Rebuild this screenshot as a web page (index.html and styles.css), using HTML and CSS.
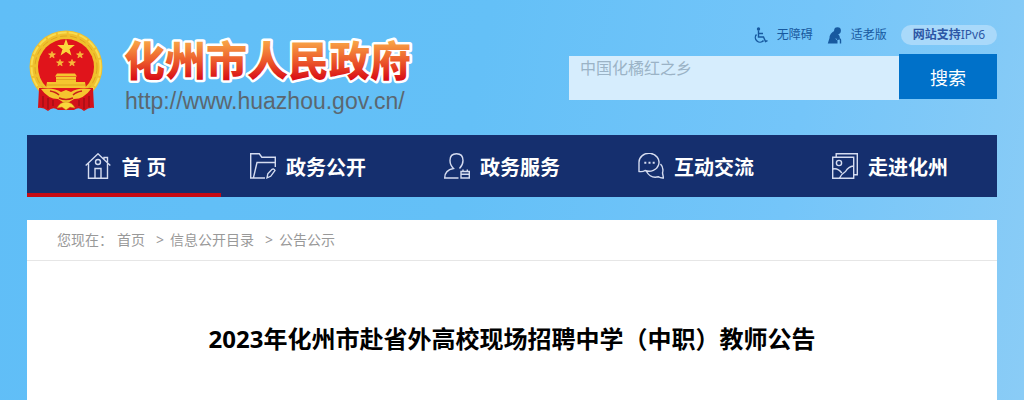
FILE: index.html
```
<!DOCTYPE html>
<html lang="zh-CN">
<head>
	<meta charset="UTF-8">
	<meta name="viewport" content="width=device-width, initial-scale=1.0">
	<title>2023年化州市赴省外高校现场招聘中学（中职）教师公告</title>
	<link rel="stylesheet" href="styles.css">
</head>
<body>
	<div class="page">
		<header class="header">
			<a class="brand" href="#">
				<svg class="emblem" viewBox="0 0 74 82" aria-hidden="true">
					<circle cx="37" cy="37" r="36.5" fill="#f0c02c"/>
					<circle cx="37" cy="37" r="34.5" fill="none" stroke="#f9dc50" stroke-width="2" stroke-dasharray="9 2"/>
					<circle cx="37" cy="37" r="31" fill="none" stroke="#dfa722" stroke-width="1" stroke-dasharray="7 3"/>
					<path d="M10 58 L9 78 Q14 77 19 81 Q24 76 29 80 L45 80 Q50 76 55 81 Q60 77 65 78 L64 58Z" fill="#d3121a"/>
					<path d="M14 66v11M19 68v11M24 70v6M50 70v6M55 68v11M60 66v11" stroke="#8f0d12" stroke-width="1" fill="none"/>
					<circle cx="37" cy="37" r="28" fill="#e0141b"/>
					<path d="M37 11l1.7 4.700 5 .1-4 3.100 1.400 4.800-4.100-2.800-4.100 2.800 1.400-4.800-4-3.100 5-.1z" fill="#fbd63c" stroke="#fbd63c" stroke-width="1.500"/>
					<g fill="#f8b93a" stroke="#f8b93a" stroke-width=".8">
						<path id="star" d="M23 21.500l.9 2.300 2.500.1-2 1.500.7 2.400-2.100-1.400-2.100 1.400.7-2.400-2-1.500 2.500-.1z"/>
						<use href="#star" x="28"/>
						<use href="#star" x="8" y="8"/>
						<use href="#star" x="20" y="8"/>
					</g>
					<path d="M28 43.500h18l2 3H26zM27 47h20v5H27zM18 52h38l1 6H17z" fill="#f5c52f"/>
					<path d="M18 55h38M27 49.500h20" stroke="#d99a1b" stroke-width=".8"/>
					<path d="M12 59 Q25 57 32 62 L37 60 L42 62 Q49 57 62 59 Q55 69 45 69 L37 74 L29 69 Q19 69 12 59Z" fill="#f5c52f"/>
					<path d="M21 61q6 1 9 4M53 61q-6 1-9 4M30 68q7 3 14 0" stroke="#c9211b" stroke-width="1.500" fill="none"/>
					<path d="M28 78q3-6 9-6t9 6l-5-1-4 3-4-3z" fill="#fbd63c" stroke="#c98314" stroke-width=".5"/>
				</svg>
				<span class="brand-text">
					<svg class="brand-name" viewBox="0 0 296 60" role="img" aria-label="化州市人民政府">
						<defs>
							<linearGradient id="fire" x1="0" y1="0" x2="0" y2="1">
								<stop offset=".2" stop-color="#f9a948"/>
								<stop offset=".55" stop-color="#ec5a2b"/>
								<stop offset=".85" stop-color="#d90f16"/>
							</linearGradient>
						</defs>
						<text x="3" y="48">化州市人民政府</text>
					</svg>
					<span class="brand-url">http://www.huazhou.gov.cn/</span>
				</span>
			</a>

			<div class="tools">
				<div class="links">
					<a class="tool" href="#">
						<svg class="tool-icon" viewBox="0 0 16 17" aria-hidden="true">
							<circle cx="5.500" cy="2" r="1.700" fill="currentColor"/>
							<path d="M5.500 3.500v6.500h5l2 4.500 2-.8M6 6.500h4M3.500 7.500a4.600 4.600 0 1 0 7 6" fill="none" stroke="currentColor" stroke-width="1.400"/>
						</svg>
						无障碍
					</a>
					<a class="tool" href="#">
						<svg class="tool-icon" viewBox="0 0 16 17" aria-hidden="true">
							<circle cx="10.500" cy="3.700" r="3.400" fill="currentColor"/>
							<path d="M8 3.500 Q2.500 6 2.500 11 L.8 16.500H10.500V13.500l-2.500-2 3 .5 2-.5-.5-2.500-2-3z" fill="currentColor"/>
							<path d="M10 12.500q3.500-1.500 3.500.5v3.500" fill="none" stroke="currentColor" stroke-width="1.400"/>
						</svg>
						适老版
					</a>
					<a class="ipv6" href="#"><b>网站支持</b>IPv6</a>
				</div>
				<form class="search">
					<input class="search-box" type="text" placeholder="中国化橘红之乡" aria-label="站内搜索">
					<button class="search-btn" type="button">搜索</button>
				</form>
			</div>
		</header>

		<nav class="nav">
			<a class="nav-item home" href="#">
				<svg class="nav-icon" viewBox="0 0 26 26" aria-hidden="true">
					<path d="M.7 12.500 13 .8l12.300 11.700M3.500 10.500v14.800h19V10.500M19 6V4.500h3.500V9M10 25V15.500h6V25"/>
					<circle cx="13" cy="9" r="2.500"/>
				</svg>
				首 页
			</a>
			<a class="nav-item" href="#">
				<svg class="nav-icon" viewBox="0 0 26 26" aria-hidden="true">
					<path d="M15 25H.7V.8h8.600l2.500 3.400h13.500V14M3.500 24.500 7 9.500h18.500M17 24.800l.8-4 4.200-4.500q2-1 3 1.200l-4.300 5.800z"/>
				</svg>
				政务公开
			</a>
			<a class="nav-item" href="#">
				<svg class="nav-icon" viewBox="0 0 26 26" aria-hidden="true">
					<path d="M14.500 25H.7Q.7 17 9.500 15.500 6 12 6 7.500 6 .8 12.500.8T19 7.500q0 4.500-3.500 8M17 18.500h8.300V25H17zM17 21.200h8.300M19 16.500v2M23.300 16.500v2"/>
				</svg>
				政务服务
			</a>
			<a class="nav-item" href="#">
				<svg class="nav-icon" viewBox="0 0 26 26" aria-hidden="true">
					<path d="M1 18.500V9.500A10 9 0 1 1 7 17.500q-2 1.500-6 1zM22.500 11q3.500 3.500 2 9l1 5q-3 .3-5-1.200-8 2-12-5.300"/>
					<path d="M6.300 9.800h2M10.500 9.800h2M14.700 9.800h2" stroke-width="2"/>
				</svg>
				互动交流
			</a>
			<a class="nav-item" href="#">
				<svg class="nav-icon" viewBox="0 0 26 26" aria-hidden="true">
					<path d="M.7 4.200h21V25.300H.7zM4.200 4V.7h21.100v21h-3.500M.8 16q5-1.500 9 4M7.500 25q2-4 6-6.500 3-5 8-5.500"/>
					<circle cx="7" cy="10" r="2.600"/>
				</svg>
				走进化州
			</a>
		</nav>

		<main class="content">
			<div class="crumbs">
				<span>您现在：</span>
				<a href="#">首页</a>
				<span class="sep">&gt;</span>
				<a href="#">信息公开目录</a>
				<span class="sep">&gt;</span>
				<a href="#">公告公示</a>
			</div>
			<h1 class="title">2023年化州市赴省外高校现场招聘中学（中职）教师公告</h1>
		</main>
	</div>
</body>
</html>
```
FILE: styles.css
```
*{
	box-sizing: border-box;
}
body{
	margin: 0;
	min-height: 100vh;
	background: linear-gradient(100deg, #60bef7 0%, #64c0f7 45%, #74c5f9 75%, #8accf6 100%);
	font-family: "Noto Sans", "Noto Sans CJK SC", sans-serif;
}
a{
	color: inherit;
	text-decoration: none;
}
.page{
	display: flex;
	flex-direction: column;
	min-height: 100vh;
	padding: 0 27px;
}
.header{
	display: flex;
	justify-content: space-between;
	align-items: flex-start;
	height: 135px;
}
.brand{
	display: flex;
	align-items: center;
	gap: 18px;
	padding: 28px 0 0 2px;
}
.emblem{
	width: 74px;
	height: 82px;
}
.brand-text{
	display: flex;
	flex-direction: column;
}
.brand-name{
	width: 296px;
	height: 60px;
}
.brand-name text{
	font-family: "Noto Sans CJK SC", sans-serif;
	font-size: 41px;
	font-weight: 900;
	fill: url(#fire);
	stroke: #fff;
	stroke-width: 5px;
	stroke-linejoin: round;
	paint-order: stroke;
}
.brand-url{
	padding-left: 4px;
	color: #5b6770;
	font-family: "Liberation Sans", Arial, sans-serif;
	font-size: 23px;
	line-height: 26px;
}
.tools{
	display: flex;
	flex-direction: column;
	align-items: flex-end;
	gap: 9px;
	width: 428px;
	padding-top: 25px;
}
.links{
	display: flex;
	align-items: center;
	gap: 14px;
	color: #17599f;
	font-size: 12px;
	line-height: 20px;
}
.tool{
	display: flex;
	align-items: center;
	gap: 8px;
}
.tool-icon{
	width: 16px;
	height: 17px;
}
.ipv6{
	padding: 0 12px;
	border-radius: 10px;
	background: #a9d9fa;
	color: #2c56a5;
}
.search{
	display: flex;
	width: 100%;
}
.search-box{
	flex: 1;
	min-width: 0;
	height: 44px;
	margin: 2px 0 0;
	padding: 0 11px 20px;
	border: none;
	background: #d6edfd;
	font-family: inherit;
	font-size: 16px;
}
.search-box::placeholder{
	color: #9bb3c6;
}
.search-box:focus{
	outline: none;
}
.search-btn{
	width: 98px;
	height: 45px;
	border: none;
	background: #0071c9;
	color: #fff;
	font-family: inherit;
	font-size: 18px;
}
.nav{
	display: grid;
	grid-template-columns: repeat(5, 1fr);
	background: #152f6e;
}
.nav-item{
	display: flex;
	align-items: center;
	justify-content: center;
	gap: 10px;
	height: 62px;
	padding-right: 20px;
	color: #fff;
	font-size: 20px;
	font-weight: bold;
}
.home{
	padding: 0 0 0 4px;
	box-shadow: inset 0 -4px #c60a13;
}
.nav-icon{
	width: 26px;
	height: 26px;
	fill: none;
	stroke: #d5dcf0;
	stroke-width: 1.4;
}
.content{
	flex: 1;
	margin-top: 23px;
	background: #fff;
}
.crumbs{
	display: flex;
	padding: 0 30px;
	border-bottom: 1px solid #e6e6e6;
	color: #999;
	font-size: 14px;
	line-height: 40px;
}
.crumbs a{
	margin-left: 4px;
}
.crumbs .sep{
	margin: 0 2px 0 11px;
}
.title{
	margin: 60px 30px 0;
	color: #000;
	font-size: 24px;
	line-height: 36px;
	text-align: center;
}
```
